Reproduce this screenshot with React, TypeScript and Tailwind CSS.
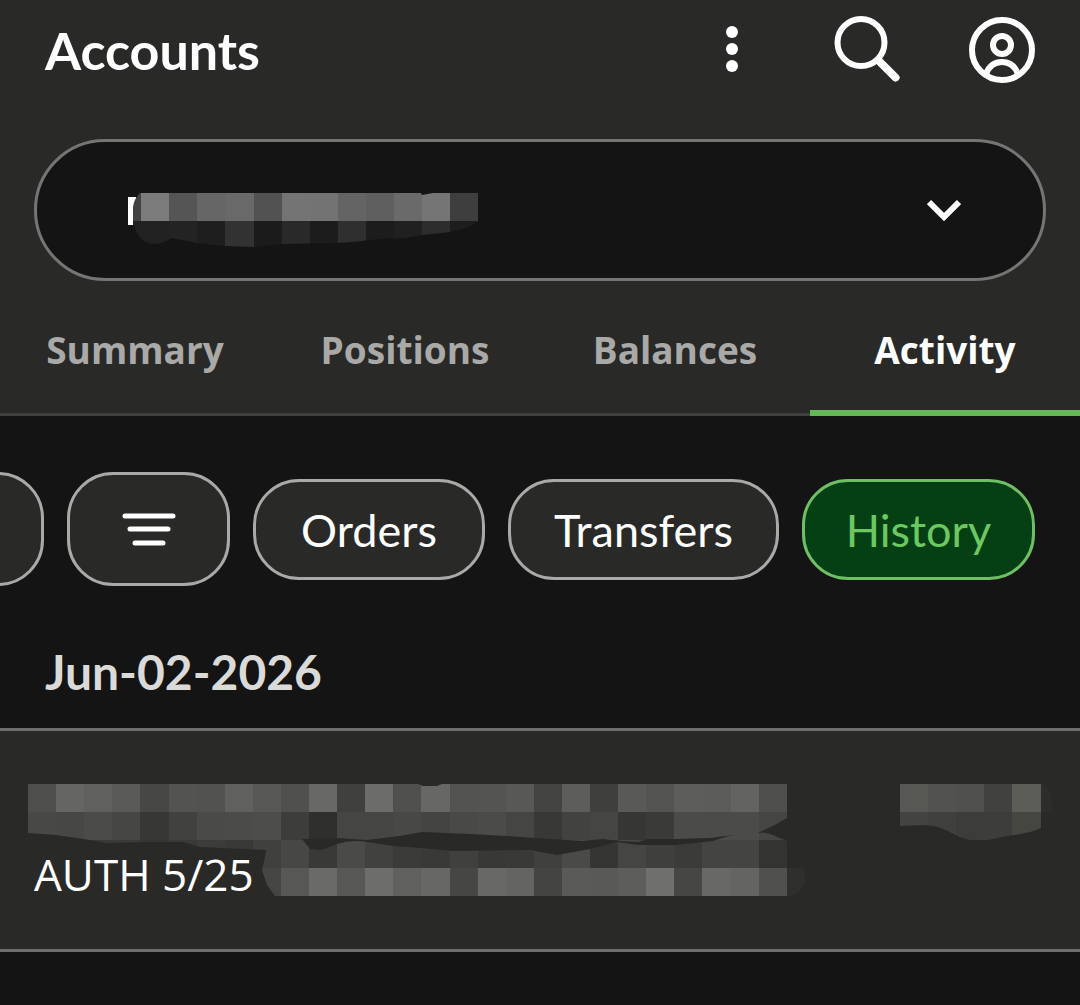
import { useId, useState } from "react";

const CELL = 28.1;

type MosaicProps = {
  rows: string[][];
  outline: string;
  width: number;
  height: number;
  // x of the first column
  start?: number;
  className?: string;
};

const accountRows = [
  ["#424242", "#7b7b7b", "#555555", "#666666", "#696969", "#525252", "#747474", "#737373", "#646464", "#5f5f5f", "#6a6a6a", "#757575", "#3e3e3e"],
  ["#212121", "#212121", "#232323", "#1e1e1e", "#323232", "#1b1b1b", "#292929", "#1c1c1c", "#2f2f2f", "#1c1c1c", "#202020", "#2d2d2d", "#1d1d1d"],
];

const accountOutline =
  "M12 0 L293 0 L294 2 L305 0 L350 0 L350 29 Q340 36 322 39 L294 42 Q272 47 258 45 Q230 49 209 50 L152 51 Q138 54 125 54 L97 53 L69 50 L44 45 Q34 51 25 51 Q10 49 6 32 L5 32 L5 14 Q6 6 12 0 Z";

const detailRows = [
  ["#4e4e4c", "#656563", "#60605e", "#5a5a58", "#474746", "#535351", "#525250", "#60605e", "#575755", "#50504e", "#686866", "#40403e", "#6c6c6a", "#50504e", "#676765", "#535351", "#545452", "#585856", "#444442", "#5d5d5b", "#3f3f3d", "#595957", "#545452", "#5d5d5b", "#5c5c5a", "#636361", "#4e4e4c"],
  ["#484846", "#474745", "#4b4b49", "#464644", "#373735", "#414140", "#4a4a48", "#4b4b49", "#4d4d4b", "#3d3d3b", "#2f2f2d", "#454543", "#454543", "#484846", "#444442", "#494947", "#4b4b49", "#454543", "#383836", "#424240", "#454543", "#363634", "#3a3a38", "#4b4b49", "#4b4b49", "#4b4b49", "#454543"],
  ["#3a3a38", "#3a3a38", "#3a3a38", "#3a3a38", "#353533", "#393937", "#3c3c3a", "#393937", "#40403e", "#474745", "#393937", "#4a4a48", "#41413f", "#3b3b39", "#393937", "#40403e", "#383836", "#393937", "#40403e", "#4a4a48", "#353533", "#454543", "#3f3f3d", "#3b3b39", "#444442", "#444442", "#333331"],
  ["#454543", "#454543", "#454543", "#454543", "#454543", "#454543", "#454543", "#454543", "#454543", "#575755", "#6a6a68", "#575755", "#6d6d6b", "#60605e", "#676765", "#464644", "#686866", "#646462", "#444442", "#5a5a58", "#595957", "#5d5d5b", "#6f6f6d", "#464644", "#686866", "#646462", "#50504e", "#2f2f2d"],
];

const detailOutline =
  "M0 0 L390 0 L395 2 L409 2 L414 0 L759 0 L759 34 Q745 43 729 49 L705 51 L682 54 L647 55 L620 55 L610 58 L591 57 L575 55 L554 57 L506 54 L479 52 L442 50 L394 48 L372 52 L339 56 L309 54 L274 55 L239 66 L172 63 L155 58 L119 58 L79 59 L62 56 L28 51 L0 49 Z " +
  "M239 60 L244 55 L274 55 L282 65 L294 66 L309 60 Q324 55 339 58 L365 62 L394 64 L425 67 L502 66 L529 71 L562 65 L589 58 L610 61 L647 61 L685 57 L700 52 Q730 46 742 50 L759 57 L759 84 L775 84 Q782 103 765 111 L759 112 L247 112 L239 101 L234 86 L237 73 Z";

const amountRows = [
  ["#575753", "#525250", "#50504e", "#414140", "#5d5d58", "#2d2d2c"],
  ["#434341", "#40403e", "#3c3c3a", "#3d3d3b", "#464641"],
];

const amountOutline =
  "M0 0 L145 0 Q153 12 152 28 L141 28 L141 44 Q131 49 107 52 L88 56 L70 56 Q62 55 48 47 Q36 41 24 41 L0 42 Z";

const tabs = ["Summary", "Positions", "Balances", "Activity"];

const filters = [
  { label: "Orders", size: "w-[232px]" },
  { label: "Transfers", size: "w-[271px]" },
  { label: "History", size: "w-[233px]" },
];

function Mosaic({ rows, outline, width, height, start = 0, className }: MosaicProps) {
  const clipId = useId();

  return (
    <svg aria-hidden="true" className={className} height={height} viewBox={`0 0 ${width} ${height}`} width={width}>
      <clipPath id={clipId}>
        <path d={outline} />
      </clipPath>
      <g clipPath={`url(#${clipId})`} shapeRendering="crispEdges">
        {rows.map((row, rowIndex) =>
          row.map((fill, index) => {
            const left = Math.round(start + index * CELL);
            const right = Math.round(start + (index + 1) * CELL);

            return <rect fill={fill} height={28} key={`${rowIndex}-${index}`} width={right - left} x={left} y={rowIndex * 28} />;
          }),
        )}
      </g>
    </svg>
  );
}

function MoreIcon() {
  return (
    <svg aria-hidden="true" fill="currentColor" height="48" viewBox="0 0 12 48" width="12">
      <circle cx="6" cy="6" r="6" />
      <circle cx="6" cy="23" r="6" />
      <circle cx="6" cy="40" r="6" />
    </svg>
  );
}

function SearchIcon() {
  return (
    <svg aria-hidden="true" fill="none" height="68" stroke="currentColor" strokeLinecap="round" viewBox="0 0 66 68" width="66">
      <circle cx="27" cy="26.5" r="23.5" strokeWidth="6" />
      <path d="M45 45 L61.5 61.5" strokeWidth="8" />
    </svg>
  );
}

function ProfileIcon() {
  return (
    <svg aria-hidden="true" fill="none" height="66" stroke="currentColor" strokeWidth="6" viewBox="0 0 66 66" width="66">
      <circle cx="33" cy="33" r="30" />
      <circle cx="33" cy="28" r="9" />
      <path d="M17 57 C20 49 26 45 33 45 C40 45 46 49 49 57" />
    </svg>
  );
}

export default function App() {
  const [activeTab, setActiveTab] = useState("Activity");
  const [activeFilter, setActiveFilter] = useState("History");

  return (
    <div className="min-h-screen overflow-hidden bg-[#141414] font-['Lato','Open_Sans',sans-serif] text-white">
      <header className="border-b-3 border-[#40403f] bg-[#292928]">
        <div className="flex h-25 items-center justify-between px-[45px]">
          <h1 className="text-[52px] leading-none font-bold">Accounts</h1>
          <div className="flex items-center">
            <button aria-label="More options" className="mr-24" type="button">
              <MoreIcon />
            </button>
            <button aria-label="Search" className="mr-[69px]" type="button">
              <SearchIcon />
            </button>
            <button aria-label="Profile" type="button">
              <ProfileIcon />
            </button>
          </div>
        </div>

        <div className="relative mx-[34px] mt-[39px]">
          <select
            aria-label="Account"
            className="block h-[142px] w-full appearance-none rounded-full border-3 border-[#757574] bg-[#141414] px-24"
          >
            <option value="primary"></option>
          </select>
          <div className="pointer-events-none absolute inset-0 flex items-center justify-between pr-[85px] pl-[94px]">
            <div className="grid pt-5">
              <span className="col-start-1 row-start-1 mt-1 h-7 w-2 bg-white" />
              <Mosaic
                className="col-start-1 row-start-1"
                height={54}
                outline={accountOutline}
                rows={accountRows}
                start={-15}
                width={350}
              />
            </div>
            <svg aria-hidden="true" fill="none" height="22" stroke="currentColor" strokeWidth="6" viewBox="0 0 34 22" width="34">
              <path d="M2 3 L17 18 L32 3" />
            </svg>
          </div>
        </div>

        <nav className="-mb-[3px] grid grid-cols-4 font-['Open_Sans',sans-serif] text-[37px] font-bold">
          {tabs.map((tab) => (
            <button
              aria-current={tab === activeTab ? "page" : undefined}
              className={
                tab === activeTab
                  ? "h-[135px] border-b-6 border-[#64b856] pt-2 text-white"
                  : "h-[135px] border-b-6 border-transparent pt-2 text-[#a9a9a8]"
              }
              key={tab}
              onClick={() => setActiveTab(tab)}
              type="button"
            >
              {tab}
            </button>
          ))}
        </nav>
      </header>

      <main>
        <div className="flex items-center justify-end gap-[23px] pt-14 pr-[45px]">
          <button
            aria-label="Search activity"
            className="h-[114px] w-[163px] shrink-0 rounded-[46px] border-3 border-[#a9a9a8] bg-[#292928]"
            type="button"
          />
          <button
            aria-label="Sort and filter"
            className="flex h-[114px] w-[163px] shrink-0 items-center justify-center rounded-[46px] border-3 border-[#a9a9a8] bg-[#292928]"
            type="button"
          >
            <svg aria-hidden="true" height="34" stroke="currentColor" strokeLinecap="round" strokeWidth="5" viewBox="0 0 54 34" width="54">
              <path d="M3 4 H51 M8 17 H46 M13 31 H41" />
            </svg>
          </button>
          {filters.map(({ label, size }) => (
            <button
              aria-pressed={label === activeFilter}
              className={`h-[101px] shrink-0 rounded-[46px] border-3 pt-1 text-[45px] ${size} ${
                label === activeFilter ? "border-[#6fbf66] bg-[#053f14] text-[#6cc860]" : "border-[#a9a9a8] bg-[#292928] text-white"
              }`}
              key={label}
              onClick={() => setActiveFilter(label)}
              type="button"
            >
              {label}
            </button>
          ))}
        </div>

        <section>
          <h2 className="px-[45px] pt-14 pb-[26px] text-[48px] leading-[60px] font-bold text-[#dadad8]">Jun-02-2026</h2>
          <article className="flex items-start justify-between border-y-3 border-[#6f6f6e] bg-[#292928] py-[53px] pr-[27px] pl-7">
            <div className="grid">
              <Mosaic className="col-start-1 row-start-1" height={112} outline={detailOutline} rows={detailRows} width={778} />
              <p className="col-start-1 row-start-1 self-end pl-1.5 font-['Open_Sans',sans-serif] text-[44px] leading-11">
                AUTH 5/25
              </p>
            </div>
            <Mosaic height={56} outline={amountOutline} rows={amountRows} width={153} />
          </article>
        </section>
      </main>
    </div>
  );
}
